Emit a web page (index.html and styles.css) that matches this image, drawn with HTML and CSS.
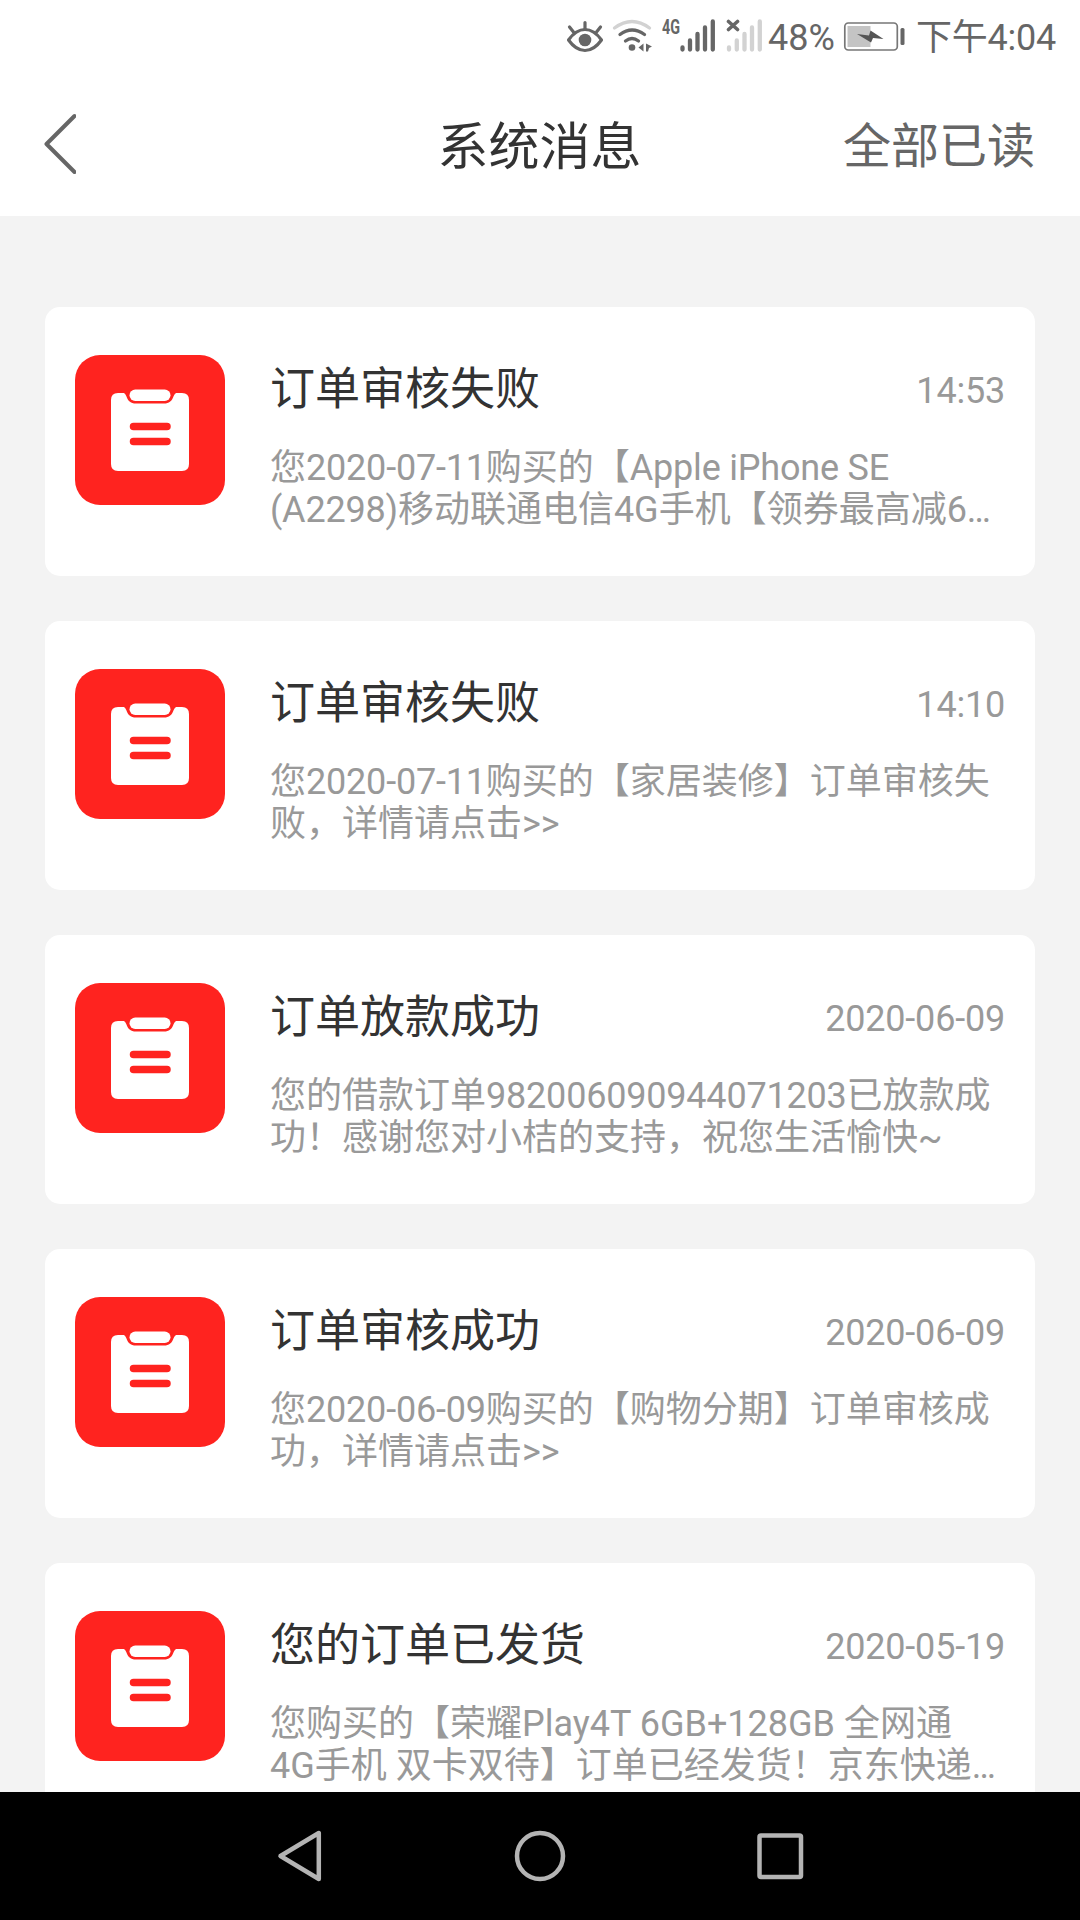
FILE: index.html
```html
<!DOCTYPE html>
<html lang="zh-CN">
<head>
<meta charset="utf-8">
<title>系统消息</title>
<link rel="stylesheet" href="styles.css">
</head>
<body>
<svg class="defs" width="0" height="0" aria-hidden="true">
  <symbol id="clipboard" viewBox="0 0 150 150">
    <path fill="#fff" d="M43 38H48C53 38 50 48.500 61 48.500H89C100 48.500 97 38 102 38H107Q114 38 114 45V109Q114 116 107 116H43Q36 116 36 109V45Q36 38 43 38Z"/>
    <rect x="54.500" y="34.500" width="41" height="11.500" rx="5.750" fill="#fff"/>
    <path d="M58.500 71.500H92M58.500 86.500H92" stroke="#ff231f" stroke-width="7.500" stroke-linecap="round"/>
  </symbol>
</svg>
<div class="screen">
  <div class="status">
    <svg class="eye" width="38" height="72" viewBox="566 0 38 72" fill="none" stroke="#666" stroke-width="3.200" stroke-linecap="round">
      <path d="M568.500 40Q576 29.500 585 29.500T601.500 40Q594 50.500 585 50.500T568.500 40Z" stroke-linejoin="round"/>
      <path d="M585 22.500V29M569.500 27L573.500 32M600.500 27L596.500 32"/>
      <circle cx="585" cy="40" r="6.300" fill="#666" stroke="none"/>
    </svg>
    <svg class="wifi" width="42" height="72" viewBox="611 0 42 72" fill="none" stroke-linecap="round" stroke-width="3.300">
      <path d="M614.500 28Q632 15 649.500 28" stroke="#d2d2d2"/>
      <path d="M620 34.500Q632 25.500 644.500 34.500M625.500 41Q632 36 638.500 41" stroke="#666"/>
      <circle cx="632" cy="47.500" r="3.300" fill="#666"/>
      <path d="M643.500 43.500V51.500L638.500 47.500ZM646 43.500L652 46.500L649 48L648 51.500H646Z" fill="#666"/>
    </svg>
    <svg class="signal" width="54" height="72" viewBox="661 0 54 72">
      <text class="net" x="662" y="33.500" textLength="18" lengthAdjust="spacingAndGlyphs">4G</text>
      <path d="M682.500 47.500V49.500M690 40.500V49.500M697.500 34V49.500M705 27.500V49.500M712.800 21.500V49.500" stroke="#666" stroke-width="4.300" stroke-linecap="round"/>
    </svg>
    <svg class="signal-off" width="37" height="72" viewBox="726 0 37 72" fill="none" stroke-linecap="round">
      <path d="M729 47.500V49.500M736.800 40.500V49.500M744.500 34V49.500M752 27.500V49.500M759.800 21.500V49.500" stroke="#d2d2d2" stroke-width="4.300"/>
      <path d="M728.500 21.500L737.500 29.500M737.500 21.500L728.500 29.500" stroke="#666" stroke-width="3.600"/>
    </svg>
    <span class="percent">48%</span>
    <svg class="battery" width="62" height="72" viewBox="843 0 62 72">
      <rect x="844.800" y="23" width="52.500" height="27" rx="3.500" fill="none" stroke="#777" stroke-width="1.700"/>
      <path d="M847.500 26H870.500V47H847.500Z" fill="#c4c4c4"/>
      <path d="M857 34L869 35.500L870.500 30.500L883.500 39L873 38L871 42.500Z" fill="#555"/>
      <rect x="900.500" y="28" width="4" height="17" rx="1.500" fill="#666"/>
    </svg>
    <span class="clock">下午4:04</span>
  </div>
  <header class="header">
    <svg class="back" width="32" height="62" viewBox="44 113 32 62" fill="none" stroke="#666" stroke-width="4" stroke-linecap="round" stroke-linejoin="round"><path d="M74.500 116L46.500 144L74.500 172"/></svg>
    <h1 class="page-title">系统消息</h1>
    <span class="read-all">全部已读</span>
  </header>
  <main class="list">
    <article class="card">
      <div class="badge"><svg width="150" height="150"><use href="#clipboard"/></svg></div>
      <div class="content">
        <div class="heading"><h2 class="title">订单审核失败</h2><time class="time">14:53</time></div>
        <p class="message">您<span class="num">2020-07-11</span>购买的【<span class="num">Apple iPhone SE</span><br><span class="num">(A2298)</span>移动联通电信4G手机【领券最高减6…</p>
      </div>
    </article>
    <article class="card">
      <div class="badge"><svg width="150" height="150"><use href="#clipboard"/></svg></div>
      <div class="content">
        <div class="heading"><h2 class="title">订单审核失败</h2><time class="time">14:10</time></div>
        <p class="message">您<span class="num">2020-07-11</span>购买的【家居装修】订单审核失<br>败，详情请点击&gt;&gt;</p>
      </div>
    </article>
    <article class="card">
      <div class="badge"><svg width="150" height="150"><use href="#clipboard"/></svg></div>
      <div class="content">
        <div class="heading"><h2 class="title">订单放款成功</h2><time class="time">2020-06-09</time></div>
        <p class="message">您的借款订单<span class="num">982006090944071203</span>已放款成<br>功！感谢您对小桔的支持，祝您生活愉快~</p>
      </div>
    </article>
    <article class="card">
      <div class="badge"><svg width="150" height="150"><use href="#clipboard"/></svg></div>
      <div class="content">
        <div class="heading"><h2 class="title">订单审核成功</h2><time class="time">2020-06-09</time></div>
        <p class="message">您<span class="num">2020-06-09</span>购买的【购物分期】订单审核成<br>功，详情请点击&gt;&gt;</p>
      </div>
    </article>
    <article class="card">
      <div class="badge"><svg width="150" height="150"><use href="#clipboard"/></svg></div>
      <div class="content">
        <div class="heading"><h2 class="title">您的订单已发货</h2><time class="time">2020-05-19</time></div>
        <p class="message">您购买的【荣耀Play4T 6GB+128GB 全网通<br>4G手机 双卡双待】订单已经发货！京东快递…</p>
      </div>
    </article>
  </main>
  <nav class="navbar">
    <svg width="50" height="56" viewBox="275 1828 50 56"><path d="M280.500 1856L318.800 1833V1879Z"/></svg>
    <svg width="56" height="56" viewBox="512 1828 56 56"><circle cx="540" cy="1856" r="23"/></svg>
    <svg width="50" height="56" viewBox="755 1828 50 56"><rect x="759.500" y="1835.500" width="41.500" height="41.500" rx="1.500"/></svg>
  </nav>
</div>
</body>
</html>
```

FILE: styles.css
```css
* {
  box-sizing: border-box;
  margin: 0;
  padding: 0;
}

body {
  width: 1080px;
  height: 1920px;
  overflow: hidden;
  font-family: Roboto, "Noto Sans CJK SC", sans-serif;
  font-weight: 400;
}

svg {
  display: block;
  flex: none;
}

.defs {
  position: absolute;
}

.screen {
  display: flex;
  flex-direction: column;
  height: 1920px;
  background: #f3f3f3;
}

.status {
  display: flex;
  flex: none;
  height: 72px;
  padding-left: 566px;
  background: #fff;
  color: #666;
  font-size: 36px;
  line-height: 42px;
  white-space: nowrap;
}

.wifi {
  margin-left: 7px;
}

.signal {
  margin-left: 8px;
}

.signal-off {
  margin-left: 11px;
}

.net {
  font: 700 20px Roboto, sans-serif;
  fill: #666;
}

.percent {
  width: 75px;
  margin-left: 5px;
  padding-top: 17px;
}

.battery {
  margin-right: 11px;
}

.clock {
  padding-top: 17px;
  letter-spacing: -0.25px;
}

.header {
  display: grid;
  grid-template-columns: 1fr auto 1fr;
  flex: none;
  align-items: start;
  height: 144px;
  padding: 41px 45px 0 44px;
  background: #fff;
}

.page-title {
  padding-top: 3px;
  color: #333;
  font-size: 51px;
  font-weight: 400;
  line-height: 64px;
}

.read-all {
  justify-self: end;
  padding-top: 2px;
  color: #666;
  font-size: 48px;
  line-height: 64px;
}

.list {
  display: flex;
  flex: 1;
  flex-direction: column;
  gap: 45px;
  min-height: 0;
  padding: 91px 45px 0;
  overflow: hidden;
}

.card {
  display: flex;
  flex: none;
  gap: 45px;
  height: 269px;
  padding: 48px 30px 0;
  border-radius: 15px;
  background: #fff;
}

.badge {
  flex: none;
  width: 150px;
  height: 150px;
  border-radius: 25px;
  background: #ff231f;
}

.content {
  flex: 1;
  min-width: 0;
  padding-top: 8px;
}

.heading {
  display: flex;
  align-items: flex-start;
  justify-content: space-between;
  height: 53px;
  margin-bottom: 31px;
}

.title {
  color: #333;
  font-size: 45px;
  font-weight: 400;
  line-height: 53px;
}

.time {
  padding-top: 7px;
  color: #999;
  font-size: 36px;
  line-height: 42px;
  letter-spacing: -0.2px;
}

.message {
  color: #999;
  font-size: 36px;
  line-height: 42px;
  white-space: nowrap;
}

.num {
  letter-spacing: -0.2px;
}

.navbar {
  display: flex;
  flex: none;
  align-items: center;
  justify-content: space-between;
  height: 128px;
  padding: 0 275px;
  background: #000;
  fill: none;
  stroke: #b4b4b4;
  stroke-width: 4.5;
  stroke-linejoin: round;
}
```
